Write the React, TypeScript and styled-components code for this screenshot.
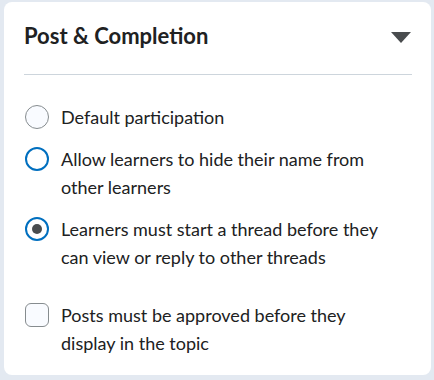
import React from "react";
import styled, { createGlobalStyle } from "styled-components";

const GlobalStyle = createGlobalStyle`
  body {
    margin: 0;
    background: #e3e9f1;
    font-family: Lato, "Noto Sans", sans-serif;
    color: #202122;
  }
`;

const Card = styled.section`
  margin: 2px 3px 0 4px;
  height: 373px;
  box-sizing: border-box;
  background: #ffffff;
  border-radius: 8px;
  padding: 0 19px 0 20px;
`;

const Header = styled.div`
  display: flex;
  align-items: center;
  justify-content: space-between;
  height: 72px;
  border-bottom: 1px solid #cdd5dc;
`;

const Title = styled.h3`
  margin: 0;
  font-size: 22px;
  font-weight: 700;
  line-height: 28px;
  padding-bottom: 4px;
`;

const Caret = styled.svg`
  width: 20px;
  height: 11px;
  margin-right: 1px;
  margin-bottom: 2px;
`;

const Options = styled.div`
  display: flex;
  flex-direction: column;
  padding-top: 28px;
`;

const Option = styled.label<{ $gap: number }>`
  display: flex;
  align-items: flex-start;
  gap: 12px;
  font-size: 18px;
  line-height: 28px;
  margin-bottom: ${(p) => p.$gap}px;
  cursor: pointer;
`;

const OptionText = styled.span`
  max-width: 330px;
`;

const Control = styled.input`
  appearance: none;
  margin: 2px 0 0 1px;
  flex: 0 0 auto;
  width: 24px;
  height: 24px;
  box-sizing: border-box;
  background: #f9fbff;
  border: 1px solid #868c8f;
  display: grid;
  place-content: center;
`;

const Radio = styled(Control)<{ $focus?: boolean }>`
  border-radius: 50%;
  ${(p) => p.$focus && "border: 2px solid #006fbf; background: #fff;"}
  &:checked {
    border: 2px solid #006fbf;
    background: #fff;
  }
  &:checked::after {
    content: "";
    width: 10px;
    height: 10px;
    border-radius: 50%;
    background: #494c4e;
  }
`;

const Checkbox = styled(Control)`
  border-radius: 6px;
`;

export default function App() {
  return (
    <>
      <GlobalStyle />
      <Card>
        <Header>
          <Title>Post &amp; Completion</Title>
          <Caret viewBox="0 0 20 11">
            <path d="M0 0h20L10 11z" fill="#494c4e" />
          </Caret>
        </Header>
        <Options>
          <Option $gap={14}>
            <Radio type="radio" name="participation" />
            <OptionText>Default participation</OptionText>
          </Option>
          <Option $gap={14}>
            <Radio type="radio" name="participation" $focus />
            <OptionText>Allow learners to hide their name from other learners</OptionText>
          </Option>
          <Option $gap={30}>
            <Radio type="radio" name="participation" defaultChecked />
            <OptionText>Learners must start a thread before they can view or reply to other threads</OptionText>
          </Option>
          <Option $gap={0}>
            <Checkbox type="checkbox" />
            <OptionText>Posts must be approved before they display in the topic</OptionText>
          </Option>
        </Options>
      </Card>
    </>
  );
}
